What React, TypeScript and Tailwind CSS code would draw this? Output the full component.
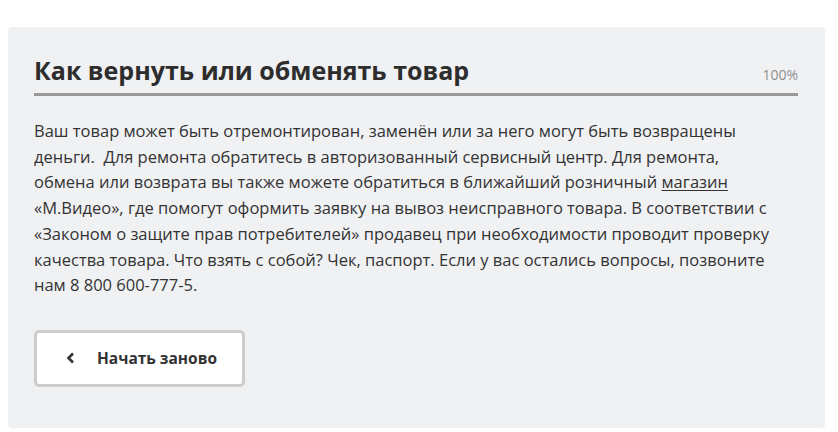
import React from "react";

export default function App() {
  return (
    <div className="w-[838px] h-[432px] bg-white pt-[27px] pl-[8px]" style={{ fontFamily: "'Open Sans', 'Noto Sans', sans-serif" }}>
      <div className="w-[817px] h-[401px] bg-[#f0f1f3] rounded-[4px] pl-[26px] pr-[27px] pt-[26px]">
        <div className="flex items-end justify-between border-b-[3px] border-[#999999] pb-[5px]">
          <h1 className="text-[25px] leading-[35px] font-bold text-[#2d2d2d]">Как вернуть или обменять товар</h1>
          <span className="text-[14px] leading-[20px] text-[#8f8f8f] mb-[3px]">100%</span>
        </div>
        <p className="mt-[22px] text-[16.5px] leading-[25.7px] text-[#333333] whitespace-nowrap">
          Ваш товар может быть отремонтирован, заменён или за него могут быть возвращены<br />
          деньги.&nbsp; Для ремонта обратитесь в авторизованный сервисный центр. Для ремонта,<br />
          обмена или возврата вы также можете обратиться в ближайший розничный <span className="underline underline-offset-2">магазин</span><br />
          «М.Видео», где помогут оформить заявку на вывоз неисправного товара. В соответствии с<br />
          «Законом о защите прав потребителей» продавец при необходимости проводит проверку<br />
          качества товара. Что взять с собой? Чек, паспорт. Если у вас остались вопросы, позвоните<br />
          нам 8 800 600-777-5.
        </p>
        <button className="mt-[32px] w-[211px] h-[57px] bg-white border-[3px] border-[#cccccc] rounded-[5px] flex items-center pl-[29px] text-[15.5px] font-bold text-[#333333]">
          <svg width="10" height="12" viewBox="0 0 10 12" className="mr-[21px]">
            <path d="M7 1.5 L2.5 6 L7 10.5" fill="none" stroke="#333" strokeWidth="2.6" />
          </svg>
          Начать заново
        </button>
      </div>
    </div>
  );
}
